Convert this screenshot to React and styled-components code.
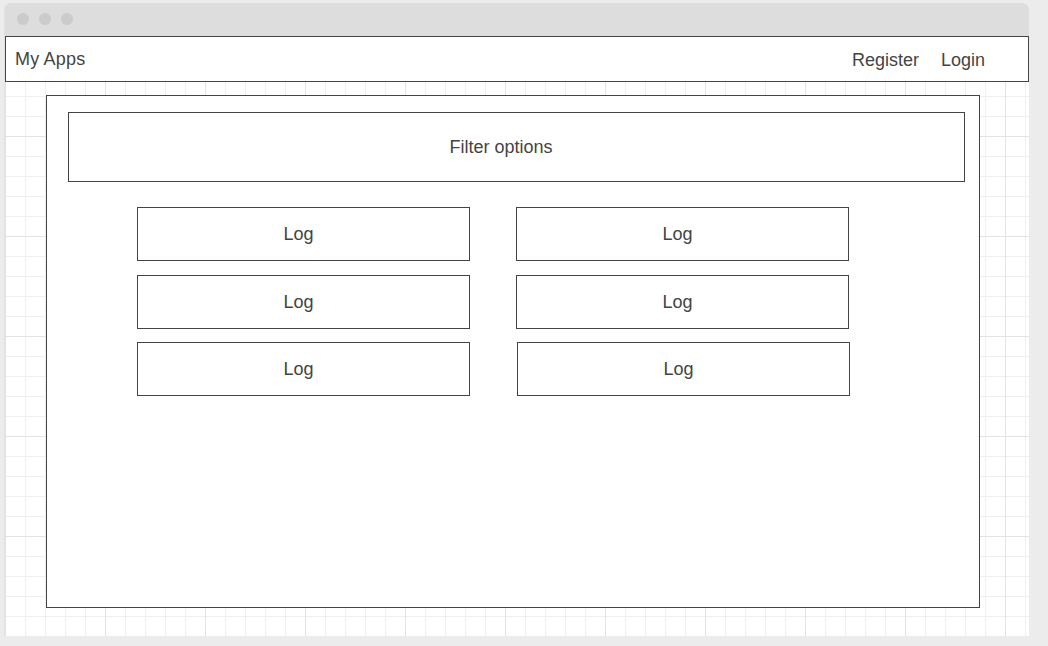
import React from "react";
import styled, { createGlobalStyle } from "styled-components";

const Global = createGlobalStyle`
  html, body { margin: 0; padding: 0; background: #ececec; }
  body { font-family: "Liberation Sans", Arial, sans-serif; color: #444; }
`;

const Window = styled.div`
  margin: 3px 0 0 4px;
  width: 1025px;
  height: 633px;
  border-left: 1px solid #e2e2e2;
  box-sizing: border-box;
  border-radius: 7px 7px 0 0;
  overflow: hidden;
  display: flex;
  flex-direction: column;
  background: #dddddd;
`;

const TitleBar = styled.div`
  height: 33px;
  flex: none;
  display: flex;
  align-items: center;
  gap: 10px;
  padding: 0 0 1px 12px;
  box-sizing: border-box;
`;

const Dot = styled.span`
  width: 12px;
  height: 12px;
  border-radius: 50%;
  background: #cbcbcb;
`;

const Canvas = styled.div`
  flex: 1;
  display: flex;
  flex-direction: column;
  background-color: #fff;
  background-image:
    linear-gradient(to right, #e3e3e3 1px, transparent 1px),
    linear-gradient(to bottom, #e3e3e3 1px, transparent 1px),
    linear-gradient(to right, #efefef 1px, transparent 1px),
    linear-gradient(to bottom, #efefef 1px, transparent 1px);
  background-size: 100px 100px, 100px 100px, 20px 20px, 20px 20px;
`;

const NavBar = styled.div`
  height: 46px;
  width: 1024px;
  box-sizing: border-box;
  border: 1px solid #444;
  background: #fff;
  display: flex;
  align-items: center;
  padding: 1px 0 0 9px;
  font-size: 18px;
  color: #444;
`;

const Brand = styled.span`
  flex: 1;
  margin-top: -1px;
  letter-spacing: 0.2px;
`;

const NavLink = styled.span`
  margin-right: ${(p) => p.$mr}px;
  margin-top: 1px;
`;

const Panel = styled.div`
  margin: 13px 0 0 41px;
  width: 934px;
  height: 513px;
  box-sizing: border-box;
  border: 1px solid #444;
  background: #fff;
  padding: 16px 0 0 21px;
  display: flex;
  flex-direction: column;
`;

const Box = styled.div`
  box-sizing: border-box;
  border: 1px solid #444;
  background: #fff;
  display: flex;
  align-items: center;
  justify-content: center;
  font-size: 18px;
  color: #444;
`;

const Filter = styled(Box)`
  width: 897px;
  height: 70px;
  padding-right: 31px;
`;

const LogGrid = styled.div`
  margin: 25px 0 0 69px;
  display: grid;
  grid-template-columns: 333px 333px;
  column-gap: 46px;
  row-gap: 14px;
`;

const Log = styled(Box)`
  height: 54px;
  padding-right: 10px;
  margin-left: ${(p) => p.$shift || 0}px;
  margin-right: ${(p) => -(p.$shift || 0)}px;
  margin-top: ${(p) => p.$up || 0}px;
`;

export default function App() {
  return (
    <>
      <Global />
      <Window>
        <TitleBar>
          <Dot />
          <Dot />
          <Dot />
        </TitleBar>
        <Canvas>
          <NavBar>
            <Brand>My Apps</Brand>
            <NavLink $mr={22}>Register</NavLink>
            <NavLink $mr={43}>Login</NavLink>
          </NavBar>
          <Panel>
            <Filter>Filter options</Filter>
            <LogGrid>
              <Log>Log</Log>
              <Log>Log</Log>
              <Log>Log</Log>
              <Log>Log</Log>
              <Log $up={-1}>Log</Log>
              <Log $up={-1} $shift={1}>Log</Log>
            </LogGrid>
          </Panel>
        </Canvas>
      </Window>
    </>
  );
}
